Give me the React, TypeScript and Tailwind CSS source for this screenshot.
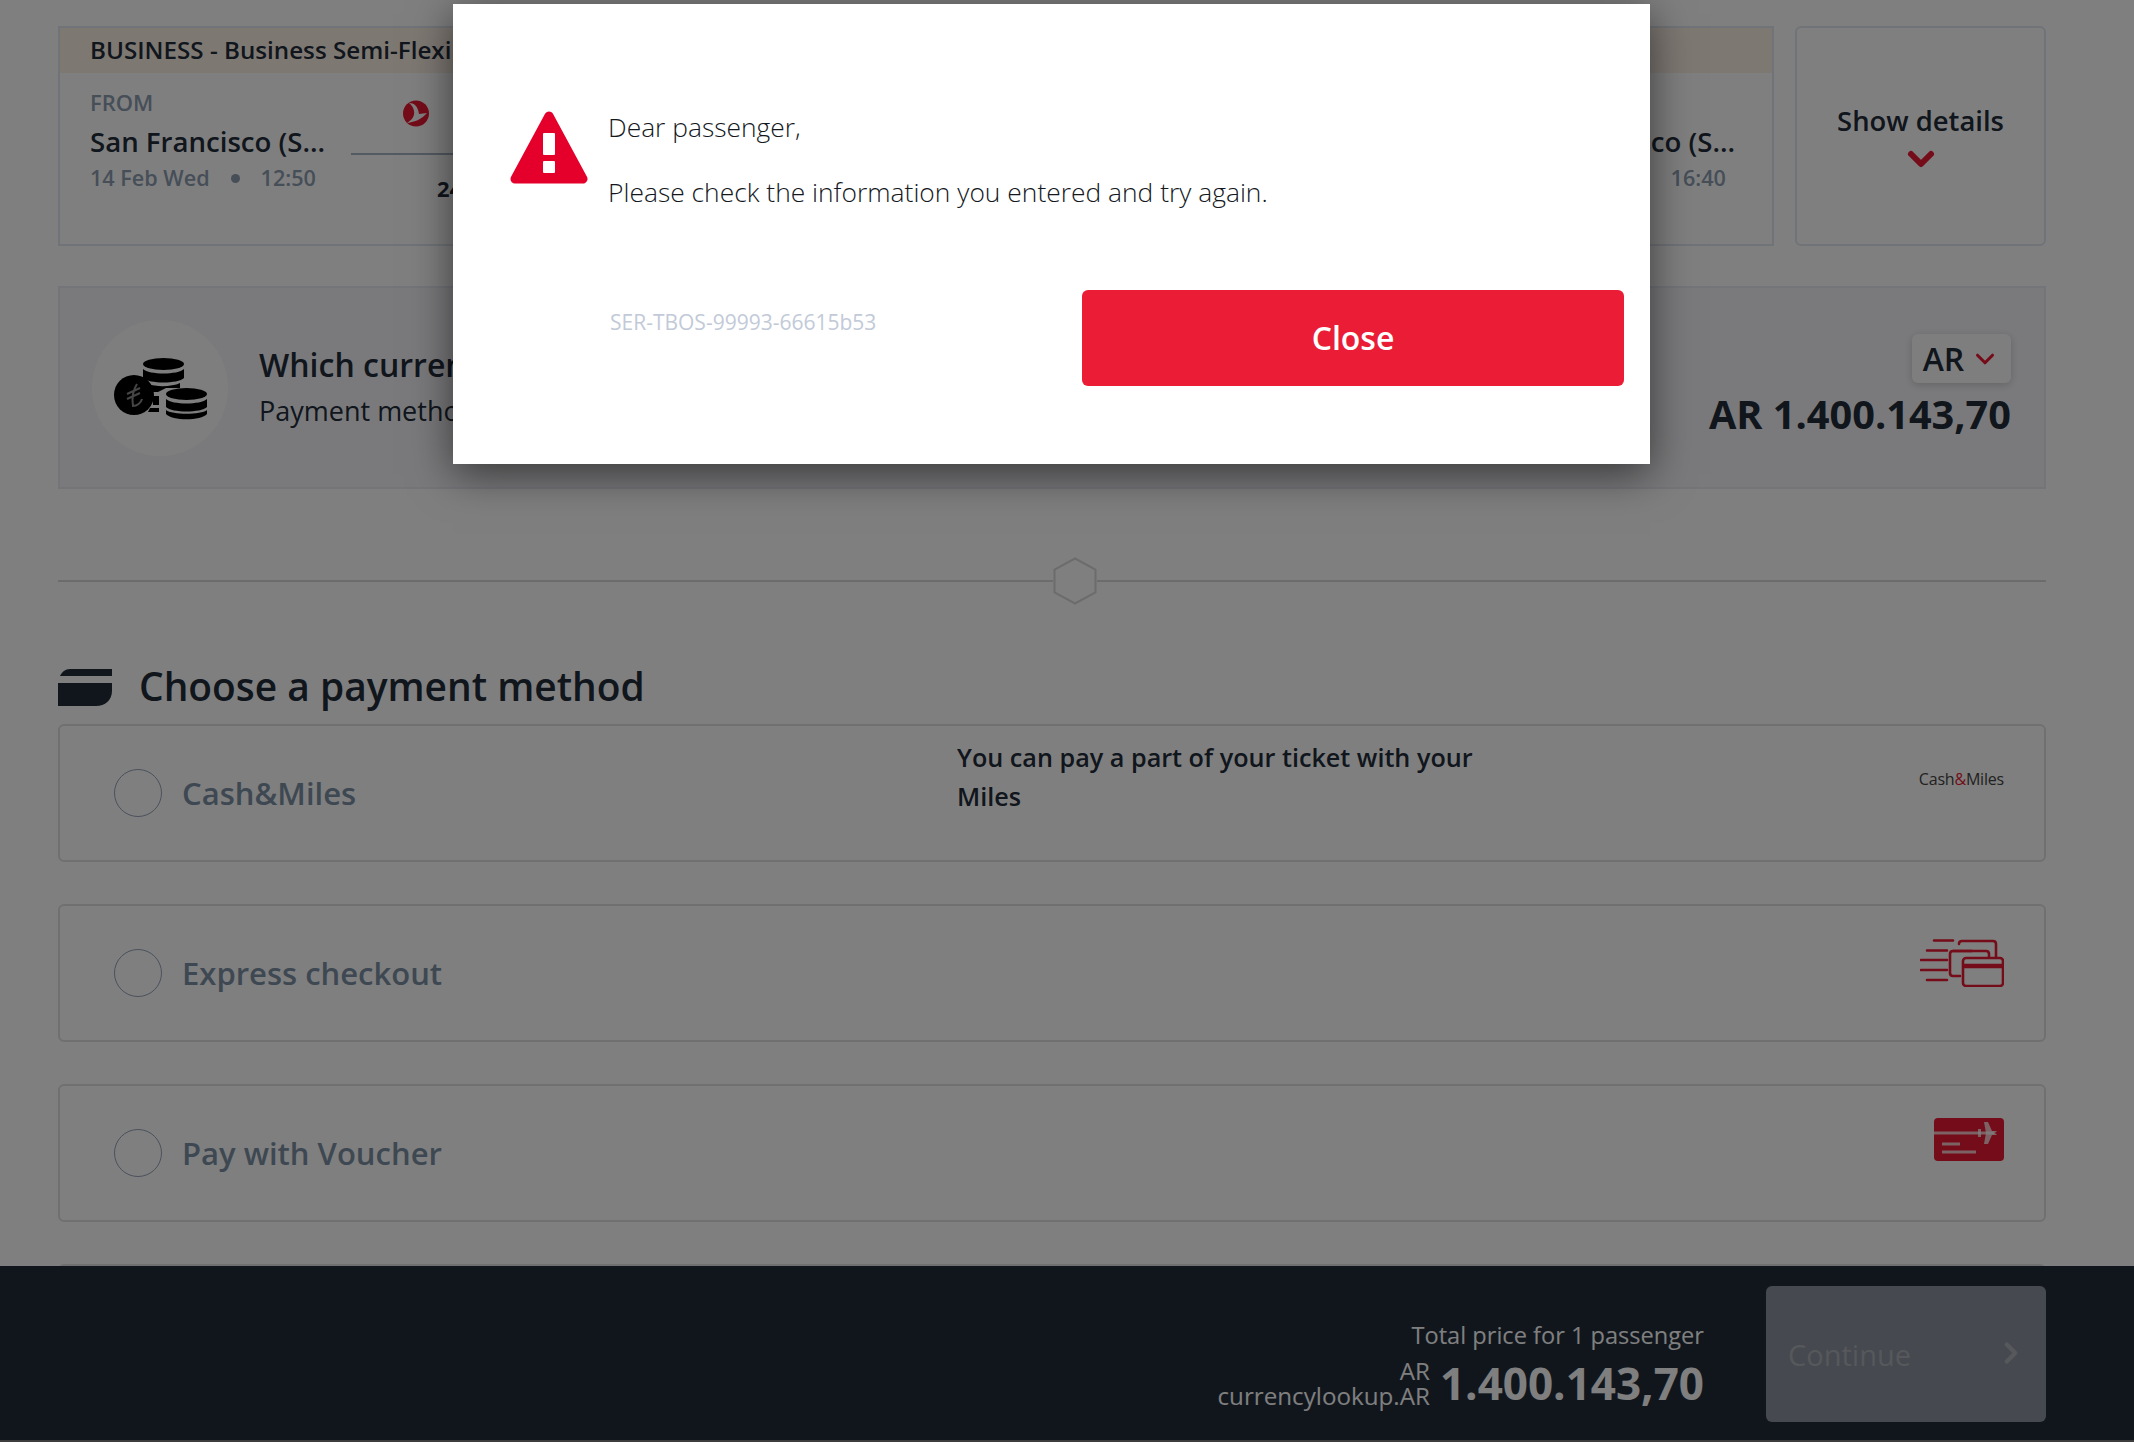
import { ChevronDown, ChevronRight } from 'lucide-react';

const font = { fontFamily: '"Open Sans", sans-serif' };

function TurkishLogo() {
  return (
    <svg width="26" height="27" viewBox="0 0 26 27">
      <circle cx="13" cy="13.5" r="13" fill="#e81932" />
      <path d="M6 3 C11 3 15 6 16 14 L24 13 C19 19 12 22 4 23 C9 20 12 16 11 11 C10.5 8 9 5 6 3 Z" fill="#fff" />
    </svg>
  );
}

function WarningIcon() {
  return (
    <svg width="78" height="73" viewBox="0 0 78 73" className="shrink-0">
      <path d="M39 5 L73 68 L5 68 Z" fill="#e4002b" stroke="#e4002b" strokeWidth="9" strokeLinejoin="round" />
      <rect x="33" y="22" width="12" height="22" rx="1" fill="#fff" />
      <rect x="33" y="50" width="12" height="12" rx="1" fill="#fff" />
    </svg>
  );
}

function CoinsIcon() {
  return (
    <svg width="93" height="62" viewBox="0 0 93 62" className="mt-[2px]">
      <g fill="#000">
        <ellipse cx="49.5" cy="6" rx="20.5" ry="6" />
        <path d="M29 11 C35 17 64 17 70 11 V20 C64 26 35 26 29 20 Z" />
        <path d="M34 26 C42 29 58 29 66 25 V30 H52 L44 34 H36 Z" />
        <path d="M39 38 H45 V47 H39 Z" />
        <path d="M36 50 H45 V54 H34 Z" />
        <ellipse cx="72.5" cy="36" rx="20.5" ry="6" />
        <path d="M52 41 C58 47 87 47 93 41 V49 C87 55 58 55 52 49 Z" />
        <path d="M52 52 C58 57 87 57 93 52 V56 C87 63 58 63 52 56 Z" />
        <circle cx="20" cy="37" r="20" />
      </g>
      <path d="M23 26 C19 32 18 41 19 48 C23 48 27 45 28 41 M13 36 L26 30 M13 41 L26 35" fill="none" stroke="#8a8a8a" strokeWidth="2" />
    </svg>
  );
}

function CardTitleIcon() {
  return (
    <svg width="54" height="38" viewBox="0 0 54 38" className="shrink-0">
      <path d="M12 0 H54 V7 H2 C4 3 7 0 12 0 Z" fill="#222c3a" />
      <path d="M0 14 H54 V22 C54 31 47 37 38 37 H0 Z" fill="#222c3a" />
    </svg>
  );
}

function ExpressIcon() {
  return (
    <svg width="84" height="48" viewBox="0 0 84 48" fill="none" stroke="#e81932" strokeWidth="2.6" strokeLinecap="round" strokeLinejoin="round">
      <path d="M14 1.5 H33 M7 11.5 H27 M1 21 H27 M1 31 H27 M7 41 H27" />
      <path d="M39 5 C39 3 40 2 42 2 H73 C75 2 76 3 76 5 V18" />
      <path d="M52 12 H33 C31 12 30 13 30 15 V34 C30 36 31 37 33 37 H40" />
      <path d="M33 12 H66 C68 12 69 13 69 15 V18" />
      <rect x="43" y="19" width="40" height="28" rx="3" />
      <path d="M43 27 H83" strokeWidth="4.5" strokeLinecap="butt" />
    </svg>
  );
}

function VoucherIcon() {
  return (
    <svg width="70" height="43" viewBox="0 0 70 43">
      <rect width="70" height="43" rx="4" fill="#e81932" />
      <path d="M0 15 H60 M8 26 H26 M8 34 H42" stroke="#fff" strokeOpacity="0.75" strokeWidth="3" fill="none" />
      <path d="M44 11 H47 V19 H44 Z M50 4 H54 L58 13 H63 L61 15 L63 17 H58 L54 26 H50 L52 15 Z" fill="#fff" fillOpacity="0.75" />
    </svg>
  );
}

function CityColumn({ label, time, className }: { label?: string; time: string; className: string }) {
  return (
    <div className={`flex flex-col ${className}`}>
      <div className="h-[23px] text-[22px] leading-[23px] font-semibold text-[#8c9cb0]">{label}</div>
      <div className="mt-[9px] text-[27.6px] leading-[36px] font-semibold text-[#222c3a]">San Francisco (S...</div>
      <div className="mt-[6px] flex items-center text-[21.6px] leading-[26px] font-semibold text-[#8c9cb0]">
        <span>14 Feb Wed</span>
        <span className="mx-[21px] h-[9px] w-[9px] rounded-full bg-[#8c9cb0]" />
        <span>{time}</span>
      </div>
    </div>
  );
}

function PaymentRow({ label, note, right, iconClass }: { label?: string; note?: boolean; right?: React.ReactNode; iconClass?: string }) {
  return (
    <div className="flex h-[138px] shrink-0 items-center rounded-[6px] border-2 border-[#e0e0e0] pr-[40px] pl-[54px]">
      <div className="h-[48px] w-[48px] shrink-0 rounded-full border border-[#94a3b8]" />
      <div className="ml-[20px] w-[775px] shrink-0 text-[31px] font-semibold text-[#7c90a4]">{label}</div>
      <div className="flex-1">
        {note && (
          <p className="-mt-[33px] w-[540px] text-[25.2px] leading-[39px] font-semibold text-[#222c3a]">
            You can pay a part of your ticket with your Miles
          </p>
        )}
      </div>
      <div className={iconClass}>{right}</div>
    </div>
  );
}

export default function App() {
  return (
    <div className="relative flex h-[1442px] w-[2134px] flex-col overflow-hidden bg-white" style={font}>
      <main className="flex min-h-0 flex-1 flex-col overflow-hidden pt-[26px] pr-[88px] pl-[58px]">
        <div className="flex h-[220px] shrink-0 gap-[21px]">
          <div className="flex flex-1 flex-col border-2 border-[#e0e6ee]">
            <div className="h-[45px] bg-[#fdf1e6] pl-[30px] text-[24.2px] leading-[43px] font-semibold text-[#222c3a]">
              BUSINESS - Business Semi-Flexible
            </div>
            <div className="flex flex-1 pt-[18px] pl-[30px]">
              <CityColumn label="FROM" time="12:50" className="w-[261px] shrink-0" />
              <div className="flex-1 pt-[9px]">
                <div className="ml-[52px]"><TurkishLogo /></div>
                <div className="mt-[26px] h-[2px] w-[1000px] bg-[#a8b4c4]" />
                <div className="mt-[17px] ml-[86px] text-[22px] font-bold text-[#222c3a]">24h 50m</div>
              </div>
              <CityColumn time="16:40" className="w-[272px] shrink-0" />
            </div>
          </div>
          <div className="flex w-[251px] shrink-0 flex-col items-center rounded-[6px] border-2 border-[#e0e6ee] pt-[75px]">
            <div className="text-[27.4px] leading-[36px] font-semibold text-[#222c3a]">Show details</div>
            <ChevronDown className="h-[40px] w-[40px] text-[#e81932]" strokeWidth={3.6} />
          </div>
        </div>

        <div className="mt-[40px] flex h-[203px] shrink-0 items-center border-2 border-[#e6eaf2] bg-[#f5f5f9] pr-[33px] pl-[32px]">
          <div className="flex h-[136px] w-[136px] shrink-0 items-center justify-center rounded-full bg-[#fdfdfd]">
            <CoinsIcon />
          </div>
          <div className="ml-[31px] flex-1">
            <div className="-mt-[2px] text-[32px] leading-[40px] font-semibold text-[#222c3a]">Which currency would you like to pay in?</div>
            <div className="mt-[8px] text-[27px] leading-[36px] text-[#222c3a]">Payment methods may vary by currency</div>
          </div>
          <div className="flex flex-col items-end">
            <div className="-mt-[1px] flex h-[49px] w-[99px] items-center justify-center gap-[6px] rounded-[6px] bg-[#fdfdfe] shadow-[0_2px_8px_rgba(0,0,0,0.18)]">
              <span className="text-[32px] font-semibold text-[#222c3a]">AR</span>
              <ChevronDown className="h-[30px] w-[30px] text-[#e81932]" strokeWidth={2.5} />
            </div>
            <div className="mt-[5px] text-[39.7px] leading-[52px] font-bold text-[#222c3a]">AR 1.400.143,70</div>
          </div>
        </div>

        <div className="mt-[68px] flex h-[48px] shrink-0 items-center">
          <div className="h-[2px] w-[995px] bg-[#d8d8d8]" />
          <svg width="44" height="48" viewBox="0 0 44 48" className="shrink-0">
            <path d="M22 1.5 L42.5 12.5 V35.5 L22 46.5 L1.5 35.5 V12.5 Z" fill="none" stroke="#d8d8d8" strokeWidth="2" />
          </svg>
          <div className="h-[2px] flex-1 bg-[#d8d8d8]" />
        </div>

        <div className="mt-[64px] flex h-[38px] shrink-0 items-center gap-[27px]">
          <CardTitleIcon />
          <h2 className="-mt-[3px] text-[38.9px] font-semibold text-[#222c3a]">Choose a payment method</h2>
        </div>

        <div className="mt-[17px] flex flex-col gap-[42px]">
          <PaymentRow
            label="Cash&Miles"
            note
            iconClass="-mt-[28px]"
            right={
              <div className="text-[16px] tracking-[-0.2px] text-[#444]">
                Cash<span className="text-[#e81932]">&amp;</span>Miles
              </div>
            }
          />
          <PaymentRow label="Express checkout" iconClass="-mt-[20px]" right={<ExpressIcon />} />
          <PaymentRow label="Pay with Voucher" iconClass="-mt-[28px]" right={<VoucherIcon />} />
          <PaymentRow />
        </div>
      </main>

      <footer className="flex h-[174px] shrink-0 items-start justify-end bg-[#222c3a] pt-[20px] pr-[88px]">
        <div className="mt-[34px] flex flex-col items-end">
          <div className="text-[23.6px] leading-[30px] text-white">Total price for 1 passenger</div>
          <div className="mt-[5px] flex items-center gap-[10px]">
            <div className="text-right text-[24.2px] leading-[25px] text-white">
              AR
              <br />
              currencylookup.AR
            </div>
            <div className="text-[44px] leading-[56px] font-bold text-white">1.400.143,70</div>
          </div>
        </div>
        <div className="ml-[62px] flex h-[136px] w-[280px] items-start justify-between rounded-[6px] bg-[#8c93a0] pt-[49px] pr-[18px] pl-[22px]">
          <span className="text-[29px] leading-[40px] font-medium text-[#adb0b6]">Continue</span>
          <ChevronRight className="mt-[1px] h-[34px] w-[34px] text-[#adb0b6]" strokeWidth={3} />
        </div>
      </footer>
      <div className="h-[2px] shrink-0 bg-[#7a7a7a]" />

      <div className="absolute inset-0 bg-black/50" />

      <div className="absolute top-[4px] left-[453px] h-[460px] w-[1197px] bg-white shadow-[0_10px_40px_rgba(0,0,0,0.55)]">
        <div className="flex items-start pt-[107px] pl-[57px]">
          <WarningIcon />
          <div className="ml-[20px] text-[26.4px] leading-[65px] font-light text-[#14181d]">
            <div className="-mt-[16px]">Dear passenger,</div>
            <div>Please check the information you entered and try again.</div>
          </div>
        </div>
        <div className="mt-[65px] flex items-start justify-between pr-[26px] pl-[157px]">
          <div className="pt-[17px] text-[21px] font-medium text-[#c2cad8]">SER-TBOS-99993-66615b53</div>
          <button className="h-[96px] w-[542px] rounded-[6px] bg-[#ea1c36] text-[32px] font-semibold text-white">Close</button>
        </div>
      </div>
    </div>
  );
}
